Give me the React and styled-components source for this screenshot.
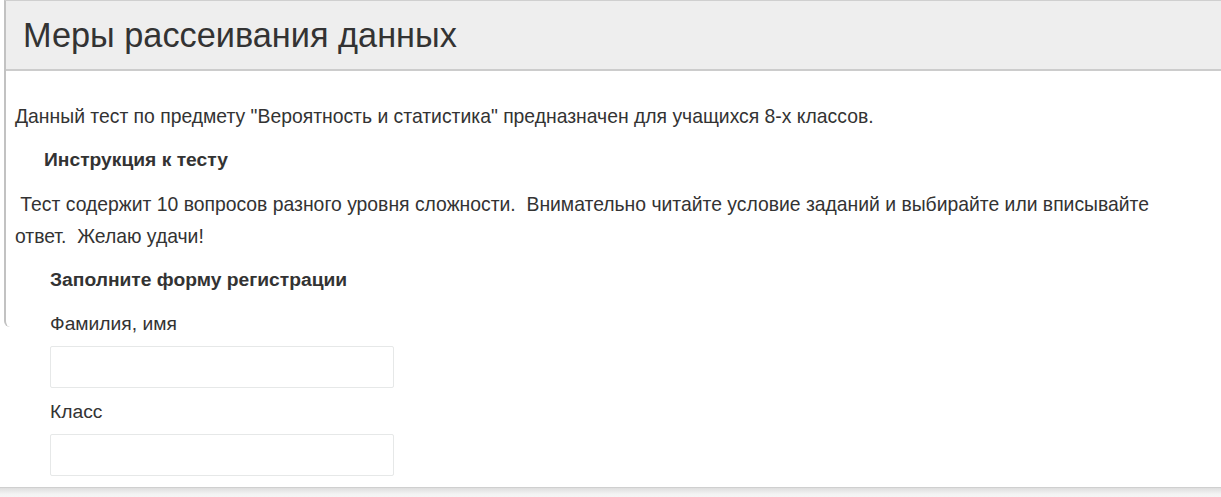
import React from 'react';
import styled, { createGlobalStyle } from 'styled-components';

const GlobalStyle = createGlobalStyle`
  html, body {
    margin: 0;
    padding: 0;
    background: #fff;
  }
  body {
    font-family: "Liberation Sans", Arial, sans-serif;
    color: #333;
  }
`;

export default function App() {
  return (
    <>
      <GlobalStyle />
      <Page>
        <Panel>
          <PanelHeader>
            <Title>Меры рассеивания данных</Title>
          </PanelHeader>
          <PanelBody>
            <Text>Данный тест по предмету "Вероятность и статистика" предназначен для учащихся 8-х классов.</Text>
            <Heading indent={29}>Инструкция к тесту</Heading>
            <Text>&nbsp;Тест содержит 10 вопросов разного уровня сложности.&nbsp; Внимательно читайте условие заданий и выбирайте или вписывайте ответ.&nbsp; Желаю удачи!</Text>
            <Form>
              <Heading>Заполните форму регистрации</Heading>
              <Field>
                <Label>Фамилия, имя</Label>
                <Input type="text" />
              </Field>
              <Field>
                <Label>Класс</Label>
                <Input type="text" />
              </Field>
            </Form>
          </PanelBody>
        </Panel>
      </Page>
      <Footer />
    </>
  );
}

const Page = styled.div`
  height: 487px;
  overflow: hidden;
`;

const Panel = styled.div`
  height: 326px;
  margin-left: 4px;
  border-top: 1px solid #cfcfcf;
  border-left: 2px solid #c2c2c2;
  border-bottom-left-radius: 6px;
`;

const PanelHeader = styled.div`
  height: 68px;
  background: #eeeeee;
  border-bottom: 2px solid #cccccc;
  display: flex;
  align-items: center;
  padding-left: 17px;
`;

const Title = styled.h1`
  margin: 0;
  font-size: 34.3px;
  font-weight: 400;
  color: #333;
`;

const PanelBody = styled.div`
  padding: 29px 0 0 9px;
  width: 1175px;
`;

const Text = styled.p`
  margin: 0 0 12px;
  font-size: 19.35px;
  line-height: 32px;
`;

const Heading = styled.div`
  margin: 0 0 12px;
  padding-left: ${({ indent }) => indent || 0}px;
  font-size: 19.25px;
  line-height: 32px;
  font-weight: 700;
`;

const Form = styled.div`
  padding-left: 35px;
`;

const Field = styled.div`
  display: flex;
  flex-direction: column;
  align-items: flex-start;
  gap: 6px;
  margin-bottom: 8px;
`;

const Label = styled.label`
  font-size: 19.25px;
  line-height: 32px;
`;

const Input = styled.input`
  box-sizing: border-box;
  width: 344px;
  height: 42px;
  border: 1px solid #e6e8e8;
  border-radius: 2px;
  background: #fff;
  outline: none;
`;

const Footer = styled.div`
  height: 10px;
  border-top: 1px solid #cfcfcf;
  background: linear-gradient(#dedede, #f3f3f3 60%, #f6f6f6);
`;
